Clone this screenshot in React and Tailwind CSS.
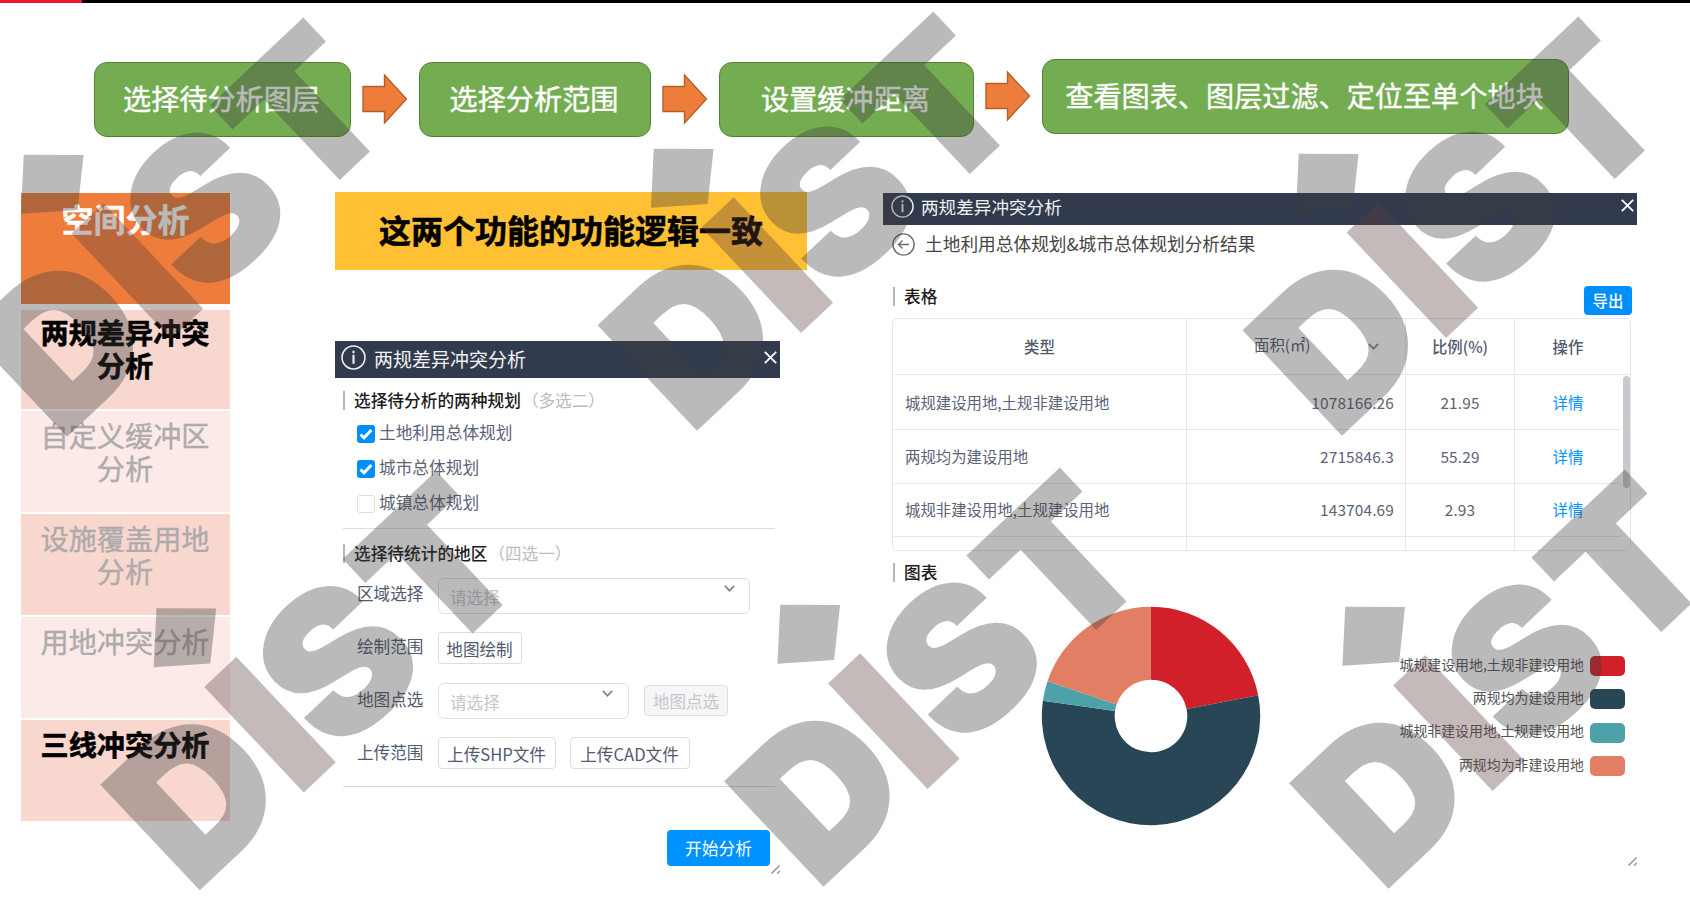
import React from 'react';

const STEPS = [
  { label: '选择待分析图层', box: 'w-[257px]', shift: '' },
  { label: '选择分析范围', box: 'w-[232px]', shift: '' },
  { label: '设置缓冲距离', box: 'w-[255px]', shift: '' },
  { label: '查看图表、图层过滤、定位至单个地块', box: 'w-[527px]', shift: 'mt-[-3px]' },
];

const MENU = [
  { label: '两规差异冲突分析', active: true, tone: 'bg-[#f8d7cf]', size: 'h-[99px] pt-[5px]' },
  { label: '自定义缓冲区分析', active: false, tone: 'bg-[#fceae8]', size: 'h-[101px] pt-[7px]' },
  { label: '设施覆盖用地分析', active: false, tone: 'bg-[#f8d7cf]', size: 'h-[101px] pt-[7px]' },
  { label: '用地冲突分析', active: false, tone: 'bg-[#fceae8]', size: 'h-[101px] pt-[7px]' },
  { label: '三线冲突分析', active: true, tone: 'bg-[#f8d7cf]', size: 'h-[101px] pt-[7px]' },
];

const ROWS = [
  { type: '城规建设用地,土规非建设用地', area: '1078166.26', ratio: '21.95', size: 'h-[55px] pt-[1px]' },
  { type: '两规均为建设用地', area: '2715846.3', ratio: '55.29', size: 'h-[54px]' },
  { type: '城规非建设用地,土规建设用地', area: '143704.69', ratio: '2.93', size: 'h-[53px]' },
];

const SLICES = [
  { name: '城规建设用地,土规非建设用地', value: 21.95, color: '#d2202a', swatch: 'bg-[#d2202a]' },
  { name: '两规均为建设用地', value: 55.29, color: '#294656', swatch: 'bg-[#294656]' },
  { name: '城规非建设用地,土规建设用地', value: 2.93, color: '#4da2a9', swatch: 'bg-[#4da2a9]' },
  { name: '两规均为非建设用地', value: 19.83, color: '#e17e63', swatch: 'bg-[#e17e63]' },
];

const WATERMARKS = [
  [67, 437],
  [697, 431],
  [1342, 436],
  [199.7, 890.5],
  [823.5, 887],
  [1388.5, 889],
];

function Arrow({ className = '' }) {
  return (
    <svg className={`h-[52px] w-[46px] shrink-0 ${className}`} viewBox="0 0 46 52">
      <path d="M1 13.5H22.5V2L44.5 26L22.5 50V38.5H1Z" fill="#ee7d3b" stroke="#b1602b" strokeWidth="1.4" />
    </svg>
  );
}

function InfoIcon({ className }) {
  return (
    <svg className={className} viewBox="0 0 24 24" fill="none" stroke="#f1f2f4" strokeWidth="1.5">
      <circle cx="12" cy="12" r="11" />
      <path d="M12 9.3V18M12 5.6V7.8" strokeWidth="2" />
    </svg>
  );
}

function CloseIcon({ className }) {
  return (
    <svg className={className} viewBox="0 0 13 13" stroke="#ffffff" strokeWidth="1.8">
      <path d="M0.8 0.8L12.2 12.2M12.2 0.8L0.8 12.2" />
    </svg>
  );
}

function Chevron({ className = '' }) {
  return (
    <svg className={`h-[7px] w-[11px] ${className}`} viewBox="0 0 11 7" fill="none" stroke="#808695" strokeWidth="1.7">
      <path d="M0.8 0.9L5.5 5.7L10.2 0.9" />
    </svg>
  );
}

function ResizeGrip({ className = '' }) {
  return (
    <svg className={`h-[9px] w-[9px] ${className}`} viewBox="0 0 9 9" stroke="#8a8a8a" strokeWidth="1.2">
      <path d="M0.5 8.5L8.5 0.5M6 8.8L8.8 6" />
    </svg>
  );
}

function Heading({ children, note }) {
  return (
    <div className="flex h-[19px] items-center">
      <span className="h-[19px] w-[2px] bg-[#b5b5b5]" />
      <span className="ml-[9px] text-[16.7px] leading-[19px] font-medium text-[#1c1c1c]">{children}</span>
      {note && <span className="ml-px text-[16.6px] leading-[19px] text-[#bcbcbc]">{note}</span>}
    </div>
  );
}

function Check({ label, checked }) {
  return (
    <div className="flex h-[18px] items-center">
      {checked ? (
        <span className="flex h-[18px] w-[18px] items-center justify-center rounded-[3px] bg-[#008ff8]">
          <svg className="h-[12px] w-[14px]" viewBox="0 0 14 12" fill="none" stroke="#ffffff" strokeWidth="3">
            <path d="M1.5 6.5L5 9.8L12.3 2" />
          </svg>
        </span>
      ) : (
        <span className="h-[18px] w-[18px] rounded-[3px] border border-[#dcdee6] bg-white" />
      )}
      <span className="mb-[4px] ml-[4px] text-[16.7px] leading-[18px] text-[#5b6377]">{label}</span>
    </div>
  );
}

function Field({ label, children, className = '', labelClass = 'mb-[5px]' }) {
  return (
    <div className={`flex items-center ${className}`}>
      <span className={`w-[81px] text-[16.6px] leading-[20px] text-[#515a6e] ${labelClass}`}>{label}</span>
      {children}
    </div>
  );
}

function SmallButton({ children, className = '' }) {
  return (
    <button className={`flex h-[32px] items-center justify-center rounded-[4px] border border-[#dcdee6] bg-white pt-[2px] pr-[1px] text-[16.6px] leading-none whitespace-nowrap text-[#515a6e] ${className}`}>
      {children}
    </button>
  );
}

function Select({ className = '' }) {
  return (
    <div className={`flex h-[36px] justify-between rounded-[6px] border border-[#dedfe5] pt-[6px] pl-[11px] ${className}`}>
      <span className="text-[16.6px] leading-[24px] text-[#c3c7cf]">请选择</span>
      <Chevron />
    </div>
  );
}

function FormDialog() {
  return (
    <section className="mt-[71px] flex w-[445px] flex-col">
      <header className="flex h-[37px] items-center bg-[#323b4d] pr-[3px] pl-[6px]">
        <InfoIcon className="mb-[4px] h-[25px] w-[25px]" />
        <h2 className="mb-[2px] ml-[8px] flex-1 text-[19px] leading-none text-[#f1f2f4]">两规差异冲突分析</h2>
        <CloseIcon className="mb-[5px] h-[13px] w-[13px]" />
      </header>
      <div className="flex flex-col pt-[13px] pr-[5px] pl-[8px]">
        <Heading note="（多选二）">选择待分析的两种规划</Heading>
        <div className="mt-[15px] ml-[14px] flex flex-col gap-[17px]">
          <Check label="土地利用总体规划" checked />
          <Check label="城市总体规划" checked />
          <Check label="城镇总体规划" />
        </div>
        <div className="mt-[15px] h-px bg-[#dddddd]" />
        <div className="mt-[15px]">
          <Heading note="（四选一）">选择待统计的地区</Heading>
        </div>
        <div className="ml-[14px] flex flex-col">
          <Field label="区域选择" className="mt-[15px] h-[36px]" labelClass="mb-[7px]">
            <Select className="w-[312px] pr-[14px]" />
          </Field>
          <Field label="绘制范围" className="mt-[18px] h-[32px]">
            <SmallButton className="w-[84px]">地图绘制</SmallButton>
          </Field>
          <Field label="地图点选" className="mt-[19px] h-[36px]">
            <Select className="w-[191px] pr-[15px]" />
            <button className="mb-[2px] ml-[15px] flex h-[31px] w-[84px] items-center justify-center rounded-[4px] border border-[#dcdee2] bg-[#f6f6f6] pt-[3px] text-[16.6px] leading-none text-[#c3c7cf]">
              地图点选
            </button>
          </Field>
          <Field label="上传范围" className="mt-[18px] h-[32px]" labelClass="mb-[3px]">
            <SmallButton className="w-[118px]">上传SHP文件</SmallButton>
            <SmallButton className="ml-[14px] w-[120px]">上传CAD文件</SmallButton>
          </Field>
        </div>
        <div className="mt-[17px] h-px bg-[#d6d6d6]" />
        <button className="mt-[43px] mr-[5px] flex h-[36px] w-[103px] items-center justify-center self-end rounded-[4px] bg-[#0092ff] pt-[1px] text-[16.8px] leading-none text-white">
          开始分析
        </button>
      </div>
      <ResizeGrip className="mt-[-1px] self-end" />
    </section>
  );
}

function Donut() {
  const point = (r, t) => {
    const a = (t / 100) * Math.PI * 2;
    return `${(110 + r * Math.sin(a)).toFixed(2)} ${(110 - r * Math.cos(a)).toFixed(2)}`;
  };
  let start = 0;
  return (
    <svg className="h-[220px] w-[220px]" viewBox="0 0 220 220">
      {SLICES.map((s) => {
        const end = start + s.value;
        const large = s.value > 50 ? 1 : 0;
        const d = `M${point(109.2, start)}A109.2 109.2 0 ${large} 1 ${point(109.2, end)}L${point(36.3, end)}A36.3 36.3 0 ${large} 0 ${point(36.3, start)}Z`;
        start = end;
        return <path key={s.name} d={d} fill={s.color} />;
      })}
    </svg>
  );
}

function ResultTable() {
  const cell = 'flex items-center border-r border-[#e6e7ea]';
  return (
    <div className="flex h-[233px] w-[739px] flex-col overflow-hidden rounded-[5px] border border-[#e6e7ea] text-[15.4px] leading-none text-[#5b6377]">
      <div className="flex h-[56px] border-b border-[#e6e7ea] text-[#515a6e]">
        <div className={`${cell} w-[294px] justify-center font-medium`}>类型</div>
        <div className={`${cell} w-[219px] pb-[3px] pl-[67px]`}>
          <span className="w-[114px]">面积(㎡)</span>
          <Chevron className="mt-[3px]" />
        </div>
        <div className={`${cell} w-[109px] justify-center font-medium`}>比例(%)</div>
        <div className="flex w-[106px] items-center justify-center font-medium">操作</div>
      </div>
      <div className="flex">
        <div className="flex flex-col">
          {ROWS.map((r) => (
            <div key={r.type} className={`flex border-b border-[#e6e7ea] ${r.size}`}>
              <div className={`${cell} w-[294px] pl-[12px]`}>{r.type}</div>
              <div className={`${cell} w-[219px] justify-end pr-[11px] tracking-[0.15px]`}>{r.area}</div>
              <div className={`${cell} w-[109px] justify-center tracking-[0.15px]`}>{r.ratio}</div>
              <div className="flex w-[106px] items-center justify-center text-[#0092ff]">详情</div>
            </div>
          ))}
          <div className="flex h-[13px]">
            <div className={`${cell} w-[294px]`} />
            <div className={`${cell} w-[219px]`} />
            <div className={`${cell} w-[109px]`} />
          </div>
        </div>
        <div className="mt-[1px] ml-[2px] h-[112px] w-[7px] rounded-full bg-[#c6cacd]" />
      </div>
    </div>
  );
}

function ResultDialog() {
  return (
    <section className="mt-px ml-[76px] flex w-[754px] flex-col">
      <header className="flex h-[32px] items-center bg-[#323b4d] pr-[3px] pl-[8px]">
        <InfoIcon className="mb-[6px] h-[23px] w-[23px]" />
        <h2 className="mb-[4px] ml-[7px] flex-1 text-[17.6px] leading-none text-[#f1f2f4]">两规差异冲突分析</h2>
        <CloseIcon className="mb-[8px] h-[13px] w-[13px]" />
      </header>
      <div className="mt-[8px] ml-[9px] flex h-[23px] items-center">
        <svg className="h-[23px] w-[23px]" viewBox="0 0 23 23" fill="none" stroke="#6d6d6d" strokeWidth="1.4">
          <circle cx="11.5" cy="11.5" r="10.6" />
          <path d="M17 11.5H6.5M10.5 7.5L6.5 11.5L10.5 15.5" />
        </svg>
        <span className="mb-[1px] ml-[10px] text-[17.7px] leading-none text-[#444444]">土地利用总体规划&城市总体规划分析结果</span>
      </div>
      <div className="mt-[31px] ml-[10px] flex h-[31px] w-[739px] items-start justify-between">
        <Heading>表格</Heading>
        <button className="mt-[-1px] flex h-[29px] w-[48px] items-center justify-center rounded-[4px] bg-[#008ff8] pt-px text-[15.4px] leading-none font-medium text-white">
          导出
        </button>
      </div>
      <div className="ml-[9px]">
        <ResultTable />
      </div>
      <div className="mt-[12px] ml-[10px]">
        <Heading>图表</Heading>
      </div>
      <div className="mt-[24px] flex h-[252px] justify-between pr-[12px] pl-[158px]">
        <Donut />
        <ul className="mt-[50px] flex flex-col gap-[13.4px]">
          {SLICES.map((s) => (
            <li key={s.name} className="flex h-[20px] items-center justify-end gap-[6px] text-[13.9px] leading-none text-[#555555]">
              <span className="mb-[3px]">{s.name}</span>
              <span className={`h-[20px] w-[35px] rounded-[5px] ${s.swatch}`} />
            </li>
          ))}
        </ul>
      </div>
      <ResizeGrip className="mt-[-1px] self-end" />
    </section>
  );
}

function Watermark({ x, y }) {
  return (
    <g transform={`translate(${x} ${y}) rotate(-43.3)`} fill="#3c3c3c" stroke="none" fontFamily="Inter, 'Liberation Sans', sans-serif" fontWeight="900" fontSize="194">
      <text transform="translate(-7 -2)" stroke="#3c3c3c" strokeWidth="4">D</text>
      <rect x="143" y="-145" width="44" height="145" fill="#5a3c3c" />
      <polygon points="162,-235 205.5,-194 163.5,-158 119.5,-194" />
      <text transform="translate(190 -3) scale(1.03 1)" stroke="#3c3c3c" strokeWidth="3">S</text>
      <text transform="translate(327 -1) scale(1.03 1)" stroke="#3c3c3c" strokeWidth="2">T</text>
    </g>
  );
}

export default function App() {
  return (
    <div className="relative flex h-[900px] w-[1690px] flex-col overflow-hidden bg-white font-['Noto_Sans_CJK_SC',sans-serif]">
      <div className="flex h-[3px] shrink-0 bg-black">
        <div className="w-[82px] bg-[#f0142f]" />
      </div>
      <nav className="flex h-[189px] shrink-0 items-start pt-[59px] pl-[94px]">
        {STEPS.map((s, i) => (
          <React.Fragment key={s.label}>
            {i > 0 && <Arrow className={i === 3 ? 'mt-[8px] mr-[11px] ml-[11px]' : 'mt-[11px] mr-[11px] ml-[11px]'} />}
            <div className={`flex h-[75px] items-center justify-center rounded-[13px] border-[1.5px] border-[#548235] bg-[#74ac52] pr-[2px] pb-[2px] text-[28.15px] leading-none whitespace-nowrap text-white [-webkit-text-stroke:0.4px] ${s.box} ${s.shift}`}>
              {s.label}
            </div>
          </React.Fragment>
        ))}
      </nav>
      <main className="flex items-start pl-[21px]">
        <aside className="mt-px flex w-[209px] flex-col gap-[2px] text-center text-[28.15px] leading-[33px]">
          <div className="mb-[4px] h-[111px] bg-[#ee7d3b] pt-[9px] text-[32px] font-bold text-white [-webkit-text-stroke:0.4px]">空间分析</div>
          {MENU.map((m) => (
            <div key={m.label} className={`pr-[20px] pl-[19px] ${m.tone} ${m.size} ${m.active ? 'font-bold text-black [-webkit-text-stroke:0.6px]' : 'text-[#aeabab] [-webkit-text-stroke:0.4px]'}`}>
              {m.label}
            </div>
          ))}
        </aside>
        <div className="ml-[105px] flex w-[472px] flex-col">
          <div className="flex h-[78px] items-center justify-center bg-[#ffc033] pb-[4px] text-[32px] leading-none font-bold text-black [-webkit-text-stroke:0.6px]">
            这两个功能的功能逻辑一致
          </div>
          <FormDialog />
        </div>
        <ResultDialog />
      </main>
      <svg className="pointer-events-none absolute inset-0 h-[900px] w-[1690px] opacity-35" viewBox="0 0 1690 900">
        {WATERMARKS.map(([x, y]) => (
          <Watermark key={x} x={x} y={y} />
        ))}
      </svg>
    </div>
  );
}
